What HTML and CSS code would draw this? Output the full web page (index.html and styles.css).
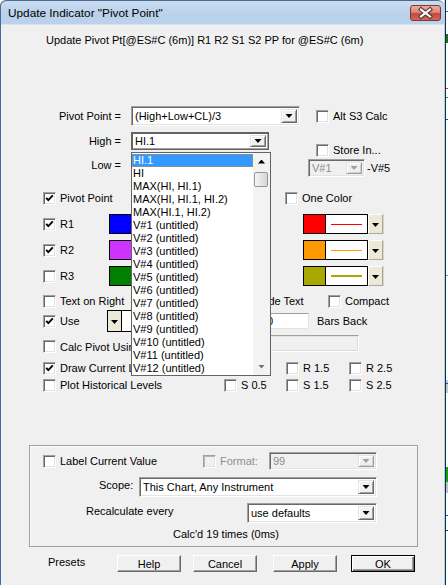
FILE: index.html
```html
<!DOCTYPE html>
<html>
<head>
<meta charset="utf-8">
<link rel="stylesheet" href="styles.css">
</head>
<body>
<div class="win">
  <div class="titlebar">
    <span class="title">Update Indicator "Pivot Point"</span>
    <span class="close"><svg width="29" height="14" viewBox="0 0 29 14"><path d="M10 3.5L19 10.5M19 3.5L10 10.5" stroke="#5a3030" stroke-width="4.2" stroke-linecap="square" fill="none"/><path d="M10 3.5L19 10.5M19 3.5L10 10.5" stroke="#fff" stroke-width="2.2" stroke-linecap="square" fill="none"/></svg></span>
  </div>
  <div class="client">
    <div class="subtitle">Update Pivot Pt[@ES#C (6m)] R1 R2 S1 S2 PP for @ES#C (6m)</div>

    <div class="top">
      <div class="tl">
        <div class="frow h20">
          <span class="flabel">Pivot Point =</span>
          <div class="combo w169"><span class="ctext">(High+Low+CL)/3</span><span class="cbtn"><i class="arr"></i></span></div>
        </div>
        <div class="frow h18 mt6">
          <span class="flabel">High =</span>
          <div class="combo focus w138"><span class="ctext">HI.1</span><span class="cbtn"><i class="arr"></i></span></div>
        </div>
        <div class="frow h18 mt6">
          <span class="flabel">Low =</span>
        </div>
      </div>
      <div class="tr">
        <div class="opt h20 pl8"><span class="cb"></span><span>Alt S3 Calc</span></div>
        <div class="opt h14 pl8 mt17"><span class="cb"></span><span>Store In...</span></div>
        <div class="frow h18 mt2">
          <div class="combo dis w57"><span class="ctext">V#1</span><span class="cbtn"><i class="arr"></i></span></div>
          <span class="vto">-V#5</span>
        </div>
      </div>
    </div>

    <div class="row r-pp">
      <div class="opt w242"><span class="cb"><svg class="ck" viewBox="0 0 11 11"><path d="M2.2 4.8L4.3 7.1L8.8 2.4"/></svg></span><span>Pivot Point</span></div>
      <div class="opt"><span class="cb"></span><span>One Color</span></div>
    </div>

    <div class="row rr mt9">
      <div class="opt w66"><span class="cb"><svg class="ck" viewBox="0 0 11 11"><path d="M2.2 4.8L4.3 7.1L8.8 2.4"/></svg></span><span>R1</span></div>
      <span class="sw blue"></span>
      <div class="picker"><span class="sw red"></span><span class="ln"><i class="line red"></i></span><span class="pbtn"><i class="arr"></i></span></div>
    </div>
    <div class="row rr mt6">
      <div class="opt w66"><span class="cb"><svg class="ck" viewBox="0 0 11 11"><path d="M2.2 4.8L4.3 7.1L8.8 2.4"/></svg></span><span>R2</span></div>
      <span class="sw purple"></span>
      <div class="picker"><span class="sw orange"></span><span class="ln"><i class="line orange"></i></span><span class="pbtn"><i class="arr"></i></span></div>
    </div>
    <div class="row rr mt6">
      <div class="opt w66"><span class="cb"></span><span>R3</span></div>
      <span class="sw green"></span>
      <div class="picker"><span class="sw olive"></span><span class="ln"><i class="line olive thick"></i></span><span class="pbtn"><i class="arr"></i></span></div>
    </div>

    <div class="row h14 mt8 pl43">
      <div class="opt w198"><span class="cb"></span><span>Text on Right</span></div>
      <div class="opt w87"><span class="cb"></span><span>Hide Text</span></div>
      <div class="opt"><span class="cb"></span><span>Compact</span></div>
    </div>

    <div class="row h22 mt2 pl43">
      <div class="opt w64"><span class="cb"><svg class="ck" viewBox="0 0 11 11"><path d="M2.2 4.8L4.3 7.1L8.8 2.4"/></svg></span><span>Use</span></div>
      <span class="ubtn"><i class="arr"></i></span>
      <span class="ubox"></span>
      <span class="num">0</span>
      <span class="bars">Bars Back</span>
    </div>

    <div class="row h18 mt3 pl43 start">
      <div class="opt w207 h13 mt5"><span class="cb"></span><span>Calc Pivot Using</span></div>
      <span class="disfield"></span>
    </div>

    <div class="row h14 mt8 pl43">
      <div class="opt w181"><span class="cb"><svg class="ck" viewBox="0 0 11 11"><path d="M2.2 4.8L4.3 7.1L8.8 2.4"/></svg></span><span>Draw Current Levels</span></div>
      <div class="opt w62"><span class="cb"></span><span>R 0.5</span></div>
      <div class="opt w63"><span class="cb"></span><span>R 1.5</span></div>
      <div class="opt"><span class="cb"></span><span>R 2.5</span></div>
    </div>
    <div class="row h14 mt3 pl43">
      <div class="opt w181"><span class="cb"></span><span>Plot Historical Levels</span></div>
      <div class="opt w62"><span class="cb"></span><span>S 0.5</span></div>
      <div class="opt w63"><span class="cb"></span><span>S 1.5</span></div>
      <div class="opt"><span class="cb"></span><span>S 2.5</span></div>
    </div>

    <div class="group">
      <div class="row h18 pl13">
        <div class="opt w160"><span class="cb"></span><span>Label Current Value</span></div>
        <div class="opt w66 grey"><span class="cb off"></span><span>Format:</span></div>
        <div class="combo dis w108 h18"><span class="ctext">99</span><span class="cbtn"><i class="arr"></i></span></div>
      </div>
      <div class="row h20 mt7">
        <span class="glabel w109 pl69">Scope:</span>
        <div class="combo w238 h20"><span class="ctext">This Chart, Any Instrument</span><span class="cbtn"><i class="arr"></i></span></div>
      </div>
      <div class="row h20 mt6">
        <span class="glabel w217 pl56">Recalculate every</span>
        <div class="combo w130 h20"><span class="ctext">use defaults</span><span class="cbtn"><i class="arr"></i></span></div>
      </div>
      <div class="calcd">Calc'd 19 times (0ms)</div>
    </div>

    <div class="row h17 mt8 btnrow">
      <span class="presets">Presets</span>
      <span class="btn">Help</span>
      <span class="btn g12">Cancel</span>
      <span class="btn g16">Apply</span>
      <span class="btn def g14">OK</span>
    </div>

    <div class="drop">
      <div class="items">
        <div class="it sel">HI.1</div>
        <div class="it">HI</div>
        <div class="it">MAX(HI, HI.1)</div>
        <div class="it">MAX(HI, HI.1, HI.2)</div>
        <div class="it">MAX(HI.1, HI.2)</div>
        <div class="it">V#1 (untitled)</div>
        <div class="it">V#2 (untitled)</div>
        <div class="it">V#3 (untitled)</div>
        <div class="it">V#4 (untitled)</div>
        <div class="it">V#5 (untitled)</div>
        <div class="it">V#6 (untitled)</div>
        <div class="it">V#7 (untitled)</div>
        <div class="it">V#8 (untitled)</div>
        <div class="it">V#9 (untitled)</div>
        <div class="it">V#10 (untitled)</div>
        <div class="it">V#11 (untitled)</div>
        <div class="it">V#12 (untitled)</div>
      </div>
      <div class="sbar">
        <div class="sbtn"><i class="arr up"></i></div>
        <div class="thumb"></div>
        <div class="sbtn sdown"><i class="arr grey-arr"></i></div>
      </div>
    </div>
  </div>
</div>
<div class="strip">
  <i class="mk m1"></i><i class="mk m2"></i><i class="mk m3"></i><i class="mk m4"></i>
  <i class="mk m5"></i><i class="mk m6"></i><i class="mk m7"></i><i class="mk m8"></i>
  <i class="mk m9"></i><i class="mk m10"></i><i class="mk m11"></i><i class="mk m12"></i>
</div>
</body>
</html>
```

FILE: styles.css
```css
body {
  margin: 0;
  background: #fff;
  font-family: "Liberation Sans", Arial, sans-serif;
  font-size: 11px;
  color: #000;
  position: relative;
  width: 448px;
  height: 585px;
  overflow: hidden;
}

.win {
  position: relative;
  width: 444px;
  height: 585px;
  border-right: 1px solid #9fd4f3;
  box-shadow: 1px 0 0 #1c2c3c;
}

.titlebar {
  box-sizing: border-box;
  height: 25px;
  border-top: 1px solid #4d6b90;
  border-radius: 6px 6px 0 0;
  background: linear-gradient(#cadcf0, #b9d1ea 60%, #bad2eb);
  box-shadow: inset 1px 0 #4d6b90, inset 0 -1px #d6e4f4;
  display: flex;
  align-items: flex-start;
}
.title {
  margin-left: 8px;
  margin-top: 5px;
  font-size: 11.8px;
  line-height: 14px;
}
.close {
  margin-left: auto;
  margin-right: 3px;
  margin-top: 4px;
  width: 31px;
  height: 16px;
  box-sizing: border-box;
  border: 1px solid #7e3732;
  border-radius: 3px;
  background: linear-gradient(#e9aca2, #d9867a 45%, #c5473a 55%, #cf6a5c);
  display: flex;
  align-items: center;
  justify-content: center;
}
.close svg { display: block; }

.client {
  position: relative;
  height: 560px;
  background: #f0f0f0;
  box-shadow: inset 1px 0 #3a6ea5;
}

.subtitle {
  padding: 9px 0 0 46px;
  line-height: 13px;
}

.top {
  display: flex;
  margin-top: 59px;
}
.tl { width: 300px; }
.tr { margin-left: 8px; }
.frow {
  display: flex;
  align-items: center;
}
.flabel {
  width: 122px;
  margin-right: 9px;
  text-align: right;
  padding-right: 1px;
  box-sizing: border-box;
}
.vto { margin-left: 2px; }

.row {
  display: flex;
  align-items: center;
}
.row.start { align-items: flex-start; }
.r-pp { margin-top: 14px; height: 14px; padding-left: 43px; }
.rr { height: 20px; padding-left: 43px; }

.h13 { height: 13px; }
.h14 { height: 14px; }
.h17 { height: 17px; }
.h18 { height: 18px; }
.h20 { height: 20px; }
.h22 { height: 22px; }
.mt2 { margin-top: 2px; }
.mt3 { margin-top: 3px; }
.mt5 { margin-top: 5px; }
.mt6 { margin-top: 6px; }
.mt7 { margin-top: 7px; }
.mt8 { margin-top: 8px; }
.mt9 { margin-top: 9px; }
.mt17 { margin-top: 17px; }
.pl8 { padding-left: 8px; }
.pl13 { padding-left: 13px; }
.pl43 { padding-left: 43px; }
.pl56 { padding-left: 56px; }
.pl69 { padding-left: 69px; }
.w57 { width: 57px; }
.w62 { width: 62px; }
.w63 { width: 63px; }
.w64 { width: 64px; }
.w66 { width: 66px; }
.w87 { width: 87px; }
.w108 { width: 108px; }
.w109 { width: 109px; }
.w130 { width: 130px; }
.w138 { width: 138px; }
.w160 { width: 160px; }
.w169 { width: 169px; }
.w181 { width: 181px; }
.w198 { width: 198px; }
.w207 { width: 207px; }
.w217 { width: 217px; }
.w238 { width: 238px; }
.w242 { width: 242px; }

/* checkbox + label */
.opt {
  display: flex;
  align-items: center;
  gap: 4px;
  white-space: nowrap;
  box-sizing: border-box;
  flex: none;
}
.cb {
  width: 13px;
  height: 13px;
  box-sizing: border-box;
  flex: none;
  background: #fff;
  border: 1px solid;
  border-color: #a0a0a0 #fff #fff #a0a0a0;
  box-shadow: inset 1px 1px #696969, inset -1px -1px #e3e3e3;
  display: flex;
  align-items: center;
  justify-content: center;
}
.cb.off {
  background: #f0f0f0;
  box-shadow: inset 1px 1px #b5b5b5, inset -1px -1px #e3e3e3;
}
.ck {
  width: 11px;
  height: 11px;
  display: block;
}
.ck path {
  fill: none;
  stroke: #000;
  stroke-width: 1.9;
}
.grey { color: #8f8f8f; }

/* combos */
.combo {
  display: flex;
  box-sizing: border-box;
  height: 100%;
  background: #fff;
  border: 1px solid;
  border-color: #a0a0a0 #fff #fff #a0a0a0;
  box-shadow: inset 1px 1px #696969, inset -1px -1px #e3e3e3;
  padding: 2px;
  flex: none;
}
.combo.focus {
  border-color: #646464;
  box-shadow: inset 1px 1px #646464, inset -1px -1px #a0a0a0;
}
.combo.dis {
  background: #f0f0f0;
  color: #8d8d8d;
}
.ctext {
  flex: 1;
  display: flex;
  align-items: center;
  padding-left: 1px;
  white-space: nowrap;
  overflow: hidden;
}
.cbtn {
  width: 16px;
  flex: none;
  box-sizing: border-box;
  background: #f0f0f0;
  border: 1px solid;
  border-color: #e3e3e3 #696969 #696969 #e3e3e3;
  box-shadow: inset 1px 1px #fff, inset -1px -1px #a0a0a0;
  display: flex;
  align-items: center;
  justify-content: center;
}
.dis .cbtn {
  border-color: #e3e3e3 #a0a0a0 #a0a0a0 #e3e3e3;
  box-shadow: inset 1px 1px #fff, inset -1px -1px #d0d0d0;
}
.arr {
  display: block;
  width: 7px;
  height: 4px;
  background: #000;
  clip-path: polygon(0 0, 100% 0, 50% 100%);
}
.dis .arr { background: #a0a0a0; }
.arr.up { clip-path: polygon(50% 0, 100% 100%, 0 100%); }
.arr.grey-arr { background: #707070; }

/* colour swatches */
.sw {
  width: 23px;
  height: 20px;
  box-sizing: border-box;
  border: 1px solid #000;
  flex: none;
}
.blue { background: #0000ff; }
.purple { background: #cc33ff; }
.green { background: #008000; }
.red { background: #ff0000; }
.orange { background: #ff9900; }
.olive { background: #a8a800; }
.picker {
  display: flex;
  margin-left: 171px;
}
.ln {
  width: 42px;
  height: 20px;
  box-sizing: border-box;
  border: 1px solid #000;
  border-left: none;
  background: #fff;
  display: flex;
  align-items: center;
  padding-left: 5px;
}
.line {
  display: block;
  width: 31px;
  height: 1px;
}
.line.thick { height: 2px; }
.pbtn {
  width: 15px;
  height: 20px;
  box-sizing: border-box;
  background: #ece9d8;
  border: 1px solid;
  border-color: #fff #aca899 #aca899 #fff;
  box-shadow: 1px 0 0 #d8d5c5;
  display: flex;
  align-items: center;
  justify-content: center;
  padding-top: 2px;
}

/* use row */
.ubtn {
  width: 15px;
  height: 22px;
  box-sizing: border-box;
  background: #ece9d8;
  border: 1px solid #000;
  display: flex;
  align-items: center;
  justify-content: center;
  padding-top: 2px;
  flex: none;
}
.ubox {
  width: 60px;
  height: 22px;
  box-sizing: border-box;
  background: #fff;
  border: 1px solid #000;
  border-left: none;
  flex: none;
}
.num {
  margin-left: 80px;
  width: 47px;
  height: 16px;
  box-sizing: border-box;
  background: #fff;
  border: 1px solid;
  border-color: #a0a0a0 #e3e3e3 #e3e3e3 #a0a0a0;
  padding-left: 4px;
  line-height: 14px;
  flex: none;
}
.bars { margin-left: 8px; }
.disfield {
  width: 109px;
  height: 17px;
  box-sizing: border-box;
  background: #f0f0f0;
  border: 1px solid;
  border-color: #a0a0a0 #fff #fff #a0a0a0;
  box-shadow: inset -1px -1px #dcdcdc, inset 1px 1px #e3e3e3;
}

/* group box */
.group {
  margin-top: 53px;
  margin-left: 29px;
  width: 389px;
  height: 102px;
  box-sizing: border-box;
  border: 1px solid #a0a0a0;
  box-shadow: inset 1px 1px #fff;
  padding-top: 6px;
}
.glabel {
  box-sizing: border-box;
  flex: none;
  white-space: nowrap;
  align-self: flex-start;
  padding-top: 2px;
}
.calcd {
  margin-top: 5px;
  padding-left: 143px;
  line-height: 13px;
}

/* buttons */
.btnrow { align-items: stretch; }
.presets {
  width: 69px;
  padding-left: 48px;
  flex: none;
  display: flex;
  align-items: center;
  margin-top: -3px;
}
.btn {
  width: 64px;
  box-sizing: border-box;
  background: #f0f0f0;
  border: 1px solid;
  border-color: #fff #696969 #696969 #fff;
  box-shadow: inset -1px -1px #a0a0a0;
  display: flex;
  align-items: center;
  justify-content: center;
  flex: none;
  padding-top: 1px;
}
.btn.def {
  border-color: #000;
  box-shadow: inset 1px 1px #fff, inset -1px -1px #696969, inset -2px -2px #a0a0a0;
}
.g12 { margin-left: 12px; }
.g14 { margin-left: 14px; }
.g16 { margin-left: 16px; }

/* open dropdown list */
.drop {
  position: absolute;
  left: 131px;
  top: 127px;
  width: 140px;
  height: 224px;
  box-sizing: border-box;
  border: 1px solid #646464;
  background: #fff;
  display: flex;
  z-index: 5;
}
.items {
  flex: 1;
  padding-top: 1px;
  overflow: hidden;
}
.it {
  height: 13px;
  line-height: 13px;
  padding-left: 1px;
  white-space: nowrap;
}
.it.sel {
  background: #3399ff;
  color: #fff;
  outline: 1px dotted #c98a3e;
  outline-offset: -1px;
}
.sbar {
  width: 17px;
  flex: none;
  background: #f3f3f3;
  display: flex;
  flex-direction: column;
}
.sbtn {
  height: 17px;
  display: flex;
  align-items: center;
  justify-content: center;
}
.sdown { margin-top: auto; }
.thumb {
  margin: 2px 2px 0 1px;
  height: 15px;
  box-sizing: border-box;
  border: 1px solid #979797;
  border-radius: 2px;
  background: linear-gradient(90deg, #f5f5f5, #e2e2e2 60%, #d6d6d6);
}

/* chart strip to the right of the window */
.strip {
  position: absolute;
  left: 446px;
  top: 0;
  width: 2px;
  height: 585px;
}
.mk { position: absolute; left: 0; width: 2px; height: 1px; background: #c8c8c8; }
.m1 { top: 11px; background: #3050d0; }
.m2 { top: 34px; height: 9px; background: #1d6b1d; }
.m3 { top: 88px; background: #ff2020; }
.m4 { top: 97px; background: #20a020; }
.m5 { top: 119px; background: #2040e0; }
.m6 { top: 275px; background: #909090; }
.m7 { top: 380px; height: 13px; background: #c8c8c8; }
.m8 { top: 383px; background: #2040e0; }
.m9 { top: 467px; height: 15px; background: #10a010; }
.m10 { top: 482px; height: 11px; background: #c0c0c0; }
.m11 { top: 515px; background: #2040e0; }
.m12 { top: 530px; background: #303030; }
```
